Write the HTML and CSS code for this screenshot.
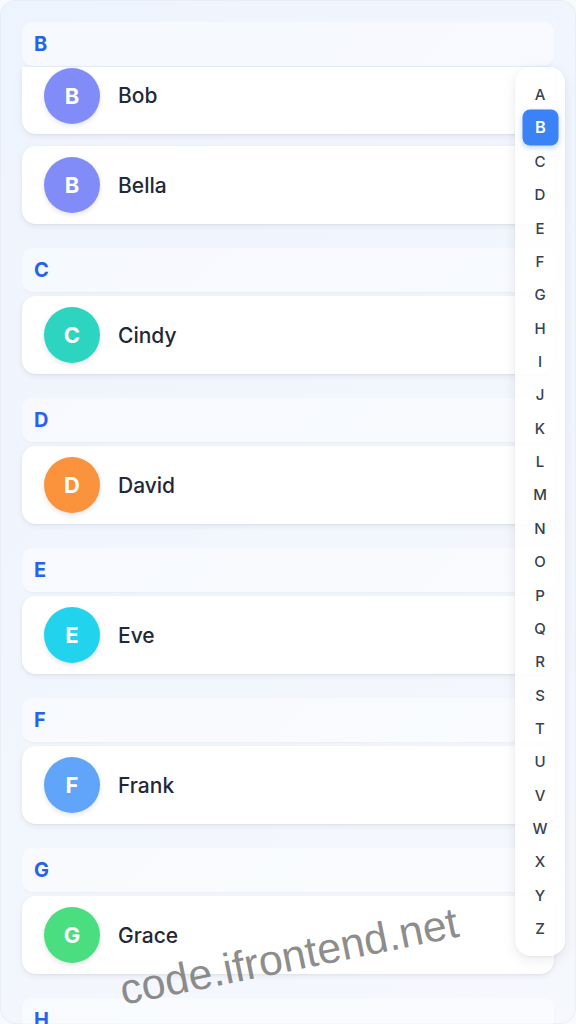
FILE: index.html
```html
<!DOCTYPE html>
<html lang="en">
<head>
<meta charset="utf-8">
<title>Contacts</title>
<link rel="stylesheet" href="styles.css">
</head>
<body>
<div class="app">
  <div class="list">
    <section class="group">
      <div class="group__head">B</div>
      <div class="group__cards">
        <div class="card card--clipped"><div class="avatar avatar--b">B</div><div class="name">Bob</div></div>
        <div class="card"><div class="avatar avatar--b">B</div><div class="name">Bella</div></div>
      </div>
    </section>
    <section class="group">
      <div class="group__head">C</div>
      <div class="group__cards">
        <div class="card"><div class="avatar avatar--c">C</div><div class="name">Cindy</div></div>
      </div>
    </section>
    <section class="group">
      <div class="group__head">D</div>
      <div class="group__cards">
        <div class="card"><div class="avatar avatar--d">D</div><div class="name">David</div></div>
      </div>
    </section>
    <section class="group">
      <div class="group__head">E</div>
      <div class="group__cards">
        <div class="card"><div class="avatar avatar--e">E</div><div class="name">Eve</div></div>
      </div>
    </section>
    <section class="group">
      <div class="group__head">F</div>
      <div class="group__cards">
        <div class="card"><div class="avatar avatar--f">F</div><div class="name">Frank</div></div>
      </div>
    </section>
    <section class="group">
      <div class="group__head">G</div>
      <div class="group__cards">
        <div class="card"><div class="avatar avatar--g">G</div><div class="name">Grace</div></div>
      </div>
    </section>
    <section class="group">
      <div class="group__head">H</div>
    </section>
  </div>

  <nav class="index">
    <span class="index__item">A</span>
    <span class="index__item index__item--active">B</span>
    <span class="index__item">C</span>
    <span class="index__item">D</span>
    <span class="index__item">E</span>
    <span class="index__item">F</span>
    <span class="index__item">G</span>
    <span class="index__item">H</span>
    <span class="index__item">I</span>
    <span class="index__item">J</span>
    <span class="index__item">K</span>
    <span class="index__item">L</span>
    <span class="index__item">M</span>
    <span class="index__item">N</span>
    <span class="index__item">O</span>
    <span class="index__item">P</span>
    <span class="index__item">Q</span>
    <span class="index__item">R</span>
    <span class="index__item">S</span>
    <span class="index__item">T</span>
    <span class="index__item">U</span>
    <span class="index__item">V</span>
    <span class="index__item">W</span>
    <span class="index__item">X</span>
    <span class="index__item">Y</span>
    <span class="index__item">Z</span>
  </nav>

  <div class="watermark">code.ifrontend.net</div>
</div>
</body>
</html>
```

FILE: styles.css
```css
* { box-sizing: border-box; }

html, body {
  margin: 0;
  padding: 0;
}

body {
  background: #f8fafd;
  font-family: Inter, "Noto Sans", "Liberation Sans", sans-serif;
  color: #1f2937;
}

.app {
  position: relative;
  height: 1024px;
  overflow: hidden;
  border-radius: 16px;
  background: linear-gradient(135deg, #eef4fe 0%, #f2f6fd 50%, #f6f8fd 100%);
  box-shadow: inset 0 0 0 1px rgba(226, 232, 240, 0.5);
  padding: 22px 22px 0 22px;
}

.list {
  display: flex;
  flex-direction: column;
  gap: 24px;
}

.group {
  display: flex;
  flex-direction: column;
  gap: 4px;
}

.group__head {
  height: 44px;
  display: flex;
  align-items: center;
  padding: 0 12px;
  border-radius: 10px;
  background: rgba(255, 255, 255, 0.45);
  box-shadow: 0 1px 2px rgba(15, 23, 42, 0.04);
  color: #2563eb;
  font-weight: 700;
  font-size: 20px;
}

.group__cards {
  display: flex;
  flex-direction: column;
  gap: 12px;
}

.card {
  height: 78px;
  display: flex;
  align-items: center;
  gap: 18px;
  padding: 0 22px;
  background: #ffffff;
  border-radius: 14px;
  box-shadow: 0 2px 6px rgba(15, 23, 42, 0.07), 0 1px 2px rgba(15, 23, 42, 0.04);
}

.card--clipped {
  height: 67px;
  margin-top: -3px;
  align-items: flex-start;
  border-top-left-radius: 0;
  border-top-right-radius: 0;
  padding-top: 1px;
}

.avatar {
  width: 56px;
  height: 56px;
  flex: none;
  border-radius: 50%;
  display: flex;
  align-items: center;
  justify-content: center;
  color: #ffffff;
  font-weight: 700;
  font-size: 22px;
  box-shadow: 0 2px 5px rgba(15, 23, 42, 0.12);
}

.avatar--b { background: #818cf8; }
.avatar--c { background: #2dd4bf; }
.avatar--d { background: #fb923c; }
.avatar--e { background: #22d3ee; }
.avatar--f { background: #60a5fa; }
.avatar--g { background: #4ade80; }

.name {
  font-size: 21px;
  font-weight: 500;
  color: #1f2937;
}

.card--clipped .name {
  line-height: 56px;
}

.index {
  position: absolute;
  right: 11px;
  top: 67px;
  width: 50px;
  padding: 11px 0;
  display: flex;
  flex-direction: column;
  align-items: center;
  border-radius: 16px;
  background: rgba(255, 255, 255, 0.88);
  box-shadow: 0 4px 14px rgba(15, 23, 42, 0.08), 0 1px 3px rgba(15, 23, 42, 0.05);
}

.index__item {
  width: 33px;
  height: 33.37px;
  display: flex;
  align-items: center;
  justify-content: center;
  font-size: 15px;
  font-weight: 500;
  color: #374151;
  border-radius: 7px;
}

.index__item--active {
  background: #3b82f6;
  color: #ffffff;
  font-weight: 600;
  transform: scale(1.09);
  box-shadow: 0 2px 5px rgba(59, 130, 246, 0.3);
}

.watermark {
  position: absolute;
  left: 114px;
  top: 932px;
  width: 350px;
  text-align: center;
  font-family: "Liberation Sans", Arial, sans-serif;
  font-size: 43px;
  color: rgba(110, 110, 110, 0.8);
  transform: rotate(-11.5deg);
  white-space: nowrap;
  pointer-events: none;
}
```
